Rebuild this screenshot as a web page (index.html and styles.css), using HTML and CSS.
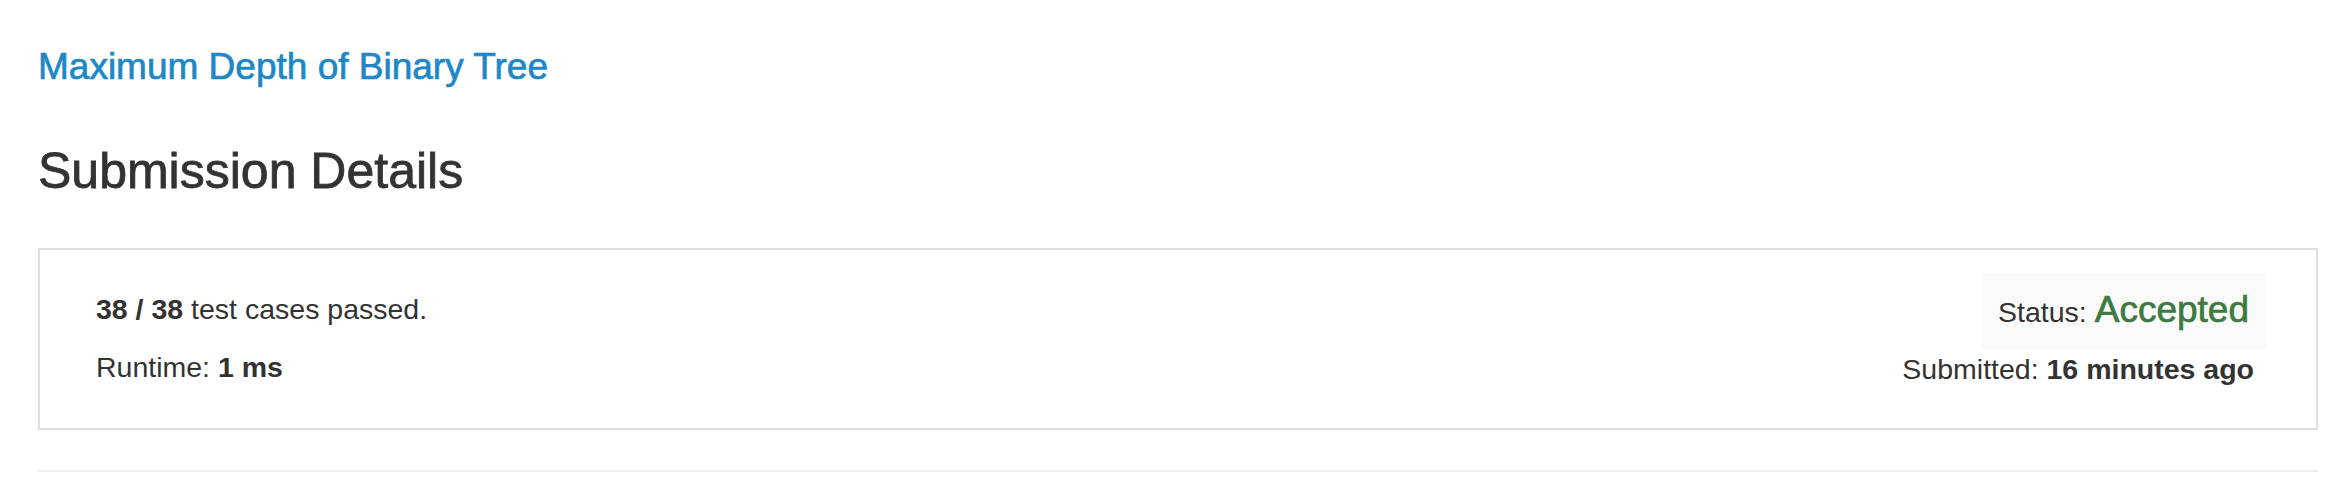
FILE: index.html
```
<!DOCTYPE html>
<html>
<head>
<meta charset="utf-8">
<title>Submission Details</title>
<link rel="stylesheet" href="styles.css">
</head>
<body>
<div class="page">
  <h4 class="problem-title"><a href="#">Maximum Depth of Binary Tree</a></h4>
  <h3 class="heading">Submission Details</h3>
  <div class="panel">
    <div class="col-left">
      <p class="line"><b>38 / 38</b> test cases passed.</p>
      <p class="line">Runtime: <b>1 ms</b></p>
    </div>
    <div class="col-right">
      <div class="status">Status: <span class="accepted">Accepted</span></div>
      <p class="line">Submitted: <b>16 minutes ago</b></p>
    </div>
  </div>
  <hr class="divider">
</div>
</body>
</html>
```

FILE: styles.css
```
html, body {
  margin: 0;
  padding: 0;
  background: #ffffff;
}
body {
  font-family: "Liberation Sans", Arial, Helvetica, sans-serif;
  color: #333333;
  font-size: 28.5px;
  line-height: 40px;
}
.page {
  padding: 0 24px 0 38px;
}
.problem-title {
  margin: 47px 0 0 0;
  font-size: 37px;
  line-height: 40px;
  font-weight: 500;
  -webkit-text-stroke: 0.7px #1e87c6;
}
.problem-title a {
  color: #1e87c6;
  text-decoration: none;
}
.heading {
  margin: 57px 0 0 0;
  font-size: 50px;
  line-height: 54px;
  font-weight: 500;
  color: #333333;
  -webkit-text-stroke: 0.8px #333333;
}
.panel {
  margin-top: 50px;
  border: 2px solid #dddddd;
  height: 178px;
  display: flex;
  justify-content: space-between;
  padding: 0 62px 0 56px;
}
.col-left {
  padding-top: 39px;
  display: flex;
  flex-direction: column;
  gap: 18px;
}
.line {
  margin: 0;
}
.line b {
  font-weight: 700;
}
.col-right {
  padding-top: 23px;
  display: flex;
  flex-direction: column;
  align-items: flex-end;
}
.status {
  background: #fafafa;
  padding: 16px 18px 16px 17px;
  margin-right: -13px;
  line-height: 41px;
}
.accepted {
  color: #3d7a3f;
  font-size: 37px;
  -webkit-text-stroke: 0.7px #3d7a3f;
}
.divider {
  margin: 40px 0 0 0;
  border: 0;
  border-top: 2px solid #eeeeee;
  height: 0;
}
```
